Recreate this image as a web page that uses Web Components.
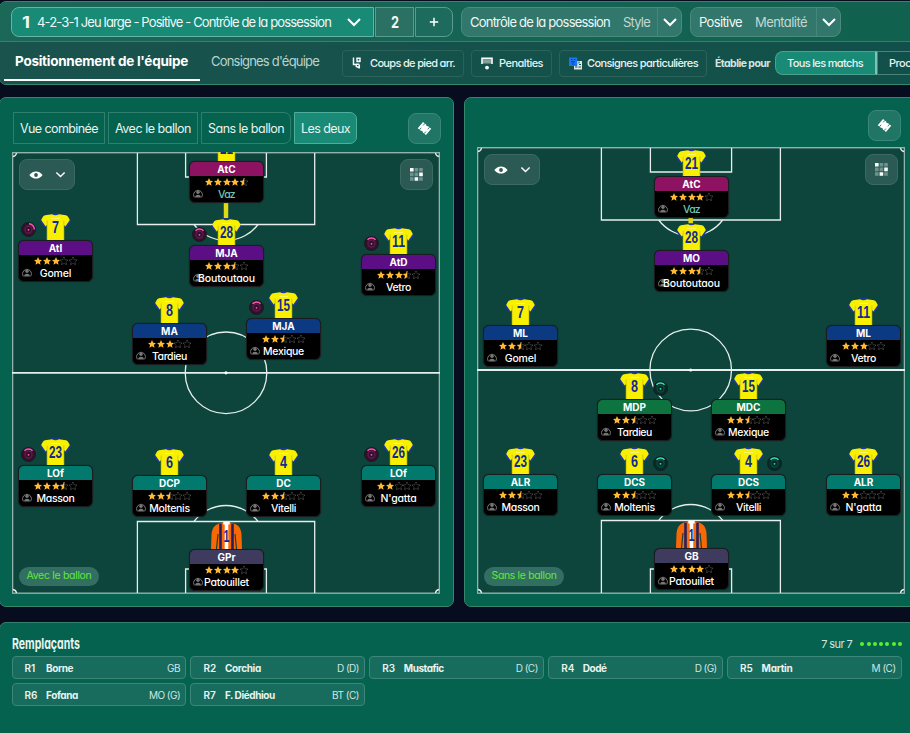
<!DOCTYPE html>
<html lang="fr">
<head>
<meta charset="utf-8">
<title>Tactique</title>
<style>
  html, body { margin: 0; height: 733px; overflow: hidden; }
  body {
    background: #070c1f;
    color: #e9f3f0;
    font-family: Inter, "Liberation Sans", sans-serif;
    font-feature-settings: "cv11";
    font-size: 12px;
  }
</style>
</head>
<body>
<tactics-screen></tactics-screen>

<script>
/* name -> [viewBox size, markup] */
const ICONS = {
  chevron: ['16 10', '<path d="M2 2l6 6 6-6" fill="none" stroke="#fff" stroke-width="2.1"/>'],
  plus: ['10 10', '<path d="M5 .8v8.4M.8 5h8.4" stroke="#fff" stroke-width="1.5"/>'],
  corner: ['9 12', '<path d="M1.500.5v7M.8 7.500h3.500M4.500 4.500h3.700M5 1.300h3v3H5zM7.300 7.500v4M7.300 10.800L4.300 9.500V7.300h3" fill="none" stroke="#f1f7f6" stroke-width="1.500"/>'],
  penalty: ['12 13', '<path d="M1.4 2.5h9v4h-9z" fill="#7da39b"/><path d="M1 7V1.4h10V7" fill="none" stroke="#fff" stroke-width="1.6"/><circle cx="6" cy="10.6" r="1.9" fill="#fff"/>'],
  orders: ['13 13', '<path d="M5 4h8v8.500H5z" fill="#dfe9e8"/><path d="M6 10h2.500M10 7.500h2M9.500 10h2.500M10 4.500v2" stroke="#15504a" stroke-width="1"/><rect y=".5" width="8.300" height="8.500" fill="#1676f3"/><path d="M2 2.500h1.400M5 2.500h1.400M2 4.800h4M3 7h2" stroke="#0a3f9c" stroke-width="1"/>'],
  eye: ['14 8', '<path d="M.4 4C2.4 1.4 4.6.4 7 .4S11.600 1.400 13.600 4C11.600 6.600 9.400 7.600 7 7.600S2.400 6.600.4 4z" fill="#fff"/><circle cx="7" cy="4" r="1.900" fill="#2d5a54"/>'],
  grid: ['13 13', '<g fill="#6f928c"><path d="M4.600 0h3.600v3.600H4.600zM9.200 0h3.600v3.600H9.200zM0 4.600h3.600v3.600H0zM4.600 4.600h3.600v3.600H4.600zM0 9.200h3.600v3.600H0zM9.200 9.200h3.600v3.600H9.200z"/></g><path d="M0 0h3.600v3.600H0zM9.200 4.600h3.600v3.600H9.200zM4.600 9.200h3.600v3.600H4.600z" fill="#fff"/>'],
  board: ['14 14', '<g transform="rotate(40 7 7)"><path d="M2 3.200h3.800l1.200.7 1.200-.7H12v7.600H8.200L7 10.100l-1.200.7H2z" fill="#fff"/><path d="M4.200 3v2.600M4.200 8.400V11M9.800 3v2.600M9.800 8.400V11" stroke="#207565" stroke-width=".8"/></g>'],
  face: ['10 10', '<path d="M1.300 9.400A4.500 4.500 0 1 1 8.700 9.400" fill="none" stroke="#777" stroke-width="1"/><circle cx="5" cy="4.300" r="1.700" fill="#777"/><path d="M2 9.400c.4-2 1.500-2.600 3-2.600s2.600.6 3 2.600z" fill="#777"/>'],
};

function icon(name, w, h) {
  const [size, inner] = ICONS[name];
  return `<svg width="${w}" height="${h}" viewBox="0 0 ${size}" style="display:block;flex:none">${inner}</svg>`;
}

class BaseElement extends HTMLElement {
  constructor() {
    super();
    this.attachShadow({ mode: 'open' });
  }
  connectedCallback() {
    this.shadowRoot.innerHTML = `<style>*{box-sizing:border-box}${this.css()}</style>${this.html()}`;
  }
  attr(name, fallback = '') { return this.getAttribute(name) ?? fallback; }
}

/* Rounded control of the header: slots in a row, optional tone. */
class BarChip extends BaseElement {
  css() {
    return `
      :host { display: flex; align-items: center; box-sizing: border-box; height: 30px;
        background: #32776b; border: 1px solid #4b8a7d; border-radius: 8px; font-size: 13px; color: #eff8f6; }
      :host([tone="active"]) { background: #188a76; border-color: #63b5a4; border-radius: 8px 0 0 8px; }
      :host([tone="mid"]) { background: #2a7164; border-color: #5a9d90; border-radius: 0; justify-content: center; }
      :host([tone="end"]) { background: #1c6b5c; border-color: #5a9d90; border-radius: 0 8px 8px 0; justify-content: center; }
      .drop { align-self: stretch; display: flex; align-items: center; justify-content: center;
        width: 24px; margin-left: auto; border-left: 1px solid #46857a; }
      :host([tone="active"]) .drop { border: 0; width: 38px; }
    `;
  }
  html() {
    return `<slot></slot>${this.hasAttribute('drop') ? `<div class="drop">${icon('chevron', 16, 10)}</div>` : ''}`;
  }
}

class ToolButton extends BaseElement {
  css() {
    return `
      :host { display: flex; align-items: center; box-sizing: border-box; height: 27px; padding: 0 8px 0 9px;
        border: 1px solid #2b6359; border-radius: 4px; font-size: 11px; color: #e9f3f0; font-weight: 500; }
      .ico { width: 18px; display: flex; }
    `;
  }
  html() {
    const [w, h] = this.attr('size').split(',');
    return `<div class="ico">${icon(this.attr('icon'), w, h)}</div><slot></slot>`;
  }
}

class AppHeader extends BaseElement {
  css() {
    return `
      :host { display: block; flex: none; box-sizing: border-box; height: 84px; width: 920px; margin-left: -1px;
        border: 1px solid #35866a; border-radius: 7px; overflow: hidden; background: #15504a; }
      .top { display: flex; height: 40px; padding: 5px 0 0 11px; background: linear-gradient(90deg, #1b6758, #11614f);
        border-bottom: 1px solid #35806d; }
      .group { display: flex; gap: 1px; margin-right: 8px; }
      .muted { color: #c3d8d5; margin-left: 13px; }
      .sub { display: flex; align-items: center; height: 42px; background: linear-gradient(90deg, #1a534d, #11504a); }
      .tab { align-self: flex-start; display: flex; align-items: center; margin-left: 4px; padding: 0 12px 0 11px;
        height: 39px; border-bottom: 2px solid #fff; font-size: 13.5px; font-weight: 700; color: #fff; }
      .tab.off { border-color: transparent; font-weight: 400; font-size: 13px; color: #bdd3cf; margin-left: 0; padding: 1px 0 0 11px; }
      .for { font-size: 10.500px; font-weight: 700; color: #d5e5e2; margin: 0 5px 0 8px; }
      .seg { display: flex; align-items: center; height: 24px; box-sizing: border-box; border: 1px solid #4aa18e;
        font-size: 11px; font-weight: 500; padding-left: 11px; flex: none; }
      .seg.on { width: 102px; background: #188a76; border-radius: 8px 0 0 8px; border-right: 2px solid #7fc3b5; }
      .seg.next { width: 60px; border-color: #4b8379; }
    `;
  }
  html() {
    return `
      <div class="top">
        <div class="group">
          <bar-chip tone="active" drop style="width:363px;padding-left:10px">
            <fit-text w="8" squash style="font-size:16px;font-weight:700">1</fit-text>
            <fit-text w="294" style="margin-left:7px">4-2-3-1 Jeu large - Positive - Contrôle de la possession</fit-text>
          </bar-chip>
          <bar-chip tone="mid" style="width:39px"><fit-text w="8" squash style="font-size:16px;font-weight:700">2</fit-text></bar-chip>
          <bar-chip tone="end" style="width:38px">${icon('plus', 10, 10)}</bar-chip>
        </div>
        <bar-chip drop style="width:221px;padding-left:8px;margin-right:8px">
          <fit-text w="140">Contrôle de la possession</fit-text><fit-text class="muted" w="27">Style</fit-text>
        </bar-chip>
        <bar-chip drop style="width:151px;padding-left:8px">
          <fit-text w="43">Positive</fit-text><fit-text class="muted" w="52">Mentalité</fit-text>
        </bar-chip>
      </div>
      <div class="sub">
        <div class="tab"><fit-text w="173">Positionnement de l'équipe</fit-text></div>
        <div class="tab off"><fit-text w="108">Consignes d'équipe</fit-text></div>
        <tool-button icon="corner" size="9,12" style="margin-left:23px"><fit-text w="85">Coups de pied arr.</fit-text></tool-button>
        <tool-button icon="penalty" size="12,13" style="margin-left:7px"><fit-text w="44">Penalties</fit-text></tool-button>
        <tool-button icon="orders" size="13,13" style="margin-left:7px"><fit-text w="111">Consignes particulières</fit-text></tool-button>
        <fit-text class="for" w="55">Établie pour</fit-text>
        <div class="seg on"><fit-text w="76">Tous les matchs</fit-text></div>
        <div class="seg next"><fit-text w="22">Proc</fit-text></div>
      </div>`;
  }
}

/* Square translucent button */
class IconButton extends BaseElement {
  css() {
    return `
      :host { display: flex; align-items: center; justify-content: center; gap: 12px; box-sizing: border-box;
        width: 33px; height: 31px; border: 1px solid #3b867a; border-radius: 8px; background: #207565; }
      :host([dim]) { background: #2b5a54; border-color: #3b6a62; }
      :host([wide]) { width: 56px; }
    `;
  }
  html() {
    if (this.hasAttribute('wide')) return icon('eye', 14, 8) + icon('chevron', 11, 7);
    const n = this.attr('icon');
    return icon(n, n === 'grid' ? 13 : 15, n === 'grid' ? 13 : 15);
  }
}

/* name -> drawn width of the label */
const NAME_WIDTH = {
  Gomel: 31.5, Vaz: 17, Boutoutaou: 57, Vetro: 25, Tardieu: 35, Mexique: 41,
  Masson: 38, Moltenis: 40.5, Vitelli: 25, "N'gatta": 36, Patouillet: 45,
};

const LINE_COLOR = {
  att: ['#8d1262', '#b53a8a'], am: ['#5c0f85', '#8433a8'], mid: ['#0b3a82', '#2b5aa5'],
  dm: ['#0d7440', '#2f9862'], def: ['#01796d', '#2f9b8d'], gk: ['#3e3b5e', '#5d5a7c'],
};

class PlayerCard extends BaseElement {
  css() {
    const [bg, edge] = LINE_COLOR[this.attr('line')];
    return `
      :host { display: flex; flex-direction: column; align-items: center; width: 75px; color: #fff; }
      .kit { position: relative; width: 31px; height: 27px; margin-left: -1px; }
      .kit > svg { display: block; overflow: visible; }
      .order { position: absolute; top: 9px; }
      .order.in { left: -19px; }
      .order.out { left: 34px; }
      .card { width: 75px; height: 42px; background: #000; border-radius: 6px; overflow: hidden;
        border: 1px solid #1c1d20; box-shadow: 0 0 1px #1b1b1d; }
      .role { height: 15px; margin: -1px -1px 0; background: ${bg}; border: 1px solid ${edge}; border-bottom: 0;
        border-radius: 6px 6px 0 0; text-align: center; font: 700 10px/14px Inter, sans-serif; }
      .stars { display: flex; justify-content: center; gap: .6px; height: 12px; padding-top: 2px; }
      .who { position: relative; height: 14px; text-align: center; font-size: 10.500px; line-height: 13px; font-weight: 450; }
      .who > svg { position: absolute; left: 3px; top: 0; }
      .who fit-text { position: relative; }
    `;
  }
  star(i, rating) {
    const p = 'M4 0l1.200 2.700 2.900.3-2.200 1.900.7 2.900L4 6.300 1.400 7.800l.7-2.900L-.1 3l2.900-.3z';
    const fill = rating - i;
    const gold = fill >= 1 ? `<path d="${p}" fill="#ffb933"/>`
      : fill > 0 ? '<path d="M4.300 0V6.300H4L1.400 7.800l.7-2.900L-.1 3l2.900-.3L4 0z" fill="#ffb933"/>' : '';
    const hollow = fill < 1 ? `<path d="${p}" fill="none" stroke="#6a6a6a" stroke-width=".6" stroke-dasharray="1.500 .5"/>` : '';
    return `<svg width="8" height="8" viewBox="0 0 8 8">${hollow}${gold}</svg>`;
  }
  shirt(no) {
    const keeper = this.attr('line') === 'gk';
    const num = `<text x="15.500" y="20" text-anchor="middle" font-family="Liberation Sans, sans-serif" font-weight="700"
      font-size="16.500" fill="#102a96" textLength="${keeper ? 6 : no.length > 1 ? 13 : 7}" lengthAdjust="spacingAndGlyphs">${no}</text>`;
    if (keeper) {
      return `<svg width="31" height="27" viewBox="0 0 31 27">
        <path d="M8 1.500L12 .5h7l4 1c4.500 1.500 7 5 7.500 11l.5 14.500H0l.5-14.500C1 6.500 3.500 3 8 1.500z" fill="#f86906"/>
        <path d="M7 12L5.500 27M24 12l1.500 15" stroke="#134239" stroke-width="1.200"/>
        <path d="M8.200 1.500h2.600V27H8.200zM20.200 1.500h2.600V27h-2.600z" fill="#24205e"/>
        <path d="M12.300 0h6.400v2.500h-1.400V27h-3.600V2.500h-1.400z" fill="#fff"/>${num}</svg>`;
    }
    return `<svg width="31" height="27" viewBox="0 0 31 27">
      <path d="M11.500 2V.2h8V2z" fill="#1c35b0"/>
      <path d="M0 8.300L1.500 6.500 6.500 13 4.600 14.500zM31 8.300l-1.500-1.800L24.500 13l1.900 1.500z" fill="#1c35b0"/>
      <path d="M5 2.300l7-1.100c2 1.300 5 1.300 7 0l7 1.100c1.500.3 2.300 1.500 3.800 4.800L25.300 13.600 24 12v15H7V12l-1.300 1.600L1.200 7.100C2.700 3.800 3.500 2.600 5 2.300z" fill="#f8f000"/>
      <path d="M7.200 7.500V27M23.800 7.500V27" stroke="#c9c312" stroke-width=".8"/>
      <path d="M11 5.500h9" stroke="#fff68c" stroke-width=".8"/>${num}</svg>`;
  }
  order(kind) {
    if (!kind) return '';
    const [base, ring, lit] = kind === 'in' ? ['#35102c', '#5b1e4c', '#ff56b4'] : ['#082b27', '#0d4a41', '#2ee6b8'];
    return `<svg class="order ${kind}" width="15" height="15" viewBox="0 0 15 15">
      <circle cx="7.500" cy="7.500" r="7" fill="${base}" stroke="#10191b" stroke-width=".8"/>
      <circle cx="7.500" cy="7.500" r="3.500" fill="none" stroke="${ring}" stroke-width="1.300"/>
      <path d="${this.hasAttribute('side') ? 'M8 1.800a5.600 5.600 0 0 1 5.300 5.700' : 'M3.500 3.800a5.600 5.600 0 0 1 8 0'}" fill="none" stroke="${lit}" stroke-width="1.500"/>
      <circle cx="7.500" cy="7.800" r=".9" fill="${lit}"/></svg>`;
  }
  html() {
    const name = this.attr('name');
    const rating = +this.attr('rating');
    return `
      <div class="kit">${this.shirt(this.attr('no'))}${this.order(this.attr('order'))}</div>
      <div class="card">
        <div class="role">${this.attr('role-label')}</div>
        <div class="stars">${[0, 1, 2, 3, 4].map(i => this.star(i, rating)).join('')}</div>
        <div class="who">${icon('face', 10, 10)}<fit-text w="${NAME_WIDTH[name]}" ${name === 'Vaz' ? 'style="color:#6fc7b8"' : ''}>${name}</fit-text></div>
      </div>`;
  }
}

/* Pitch markings plus players pinned on it; x is the centre of a card, y its top edge. */
class TacticPitch extends BaseElement {
  get data() { return PITCHES[this.attr('side')]; }
  css() {
    return `
      :host { display: block; position: relative; width: 428px; height: ${this.data.h}px; overflow: hidden; background: #0d443b; }
      .lines { display: block; }
      player-card, .eye, .grid, .tag { position: absolute; }
      .eye { left: 7px; top: 7px; }
      .grid { left: 388px; top: 7px; }
      .tag { left: 7px; bottom: 8px; height: 19px; width: 80px; border-radius: 10px; background: #326f62;
        color: #5fe83b; font-size: 10.500px; line-height: 18px; text-align: center; }
    `;
  }
  html() {
    const { h, box, goal, boxDepth, mid, bottom, link, players, tag, tagWidth, cx } = this.data;
    const [bx, bw] = box, [gx, gw] = goal;
    return `
      <svg class="lines" width="428" height="${h}" viewBox="0 0 428 ${h}" fill="none" stroke="#e6efed" stroke-width="1.300">
        <rect x=".6" y=".7" width="426.800" height="${h - 1.5}" stroke="#93b2ab" stroke-width="1.400"/>
        <path d="M0 ${mid}h428" stroke-width="1.800"/>
        <circle cx="${cx}" cy="${mid}" r="40.800"/>
        <circle cx="${cx}" cy="${mid}" r="1.600" fill="#fff" stroke="none"/>
        <path d="M${bx} 1v${boxDepth}h${bw}V1M${bx} ${h - 1}V${bottom}h${bw}V${h - 1}"/>
        <path d="M${gx} 1v24h${gw}V1M${gx} ${h - 1}v-24h${gw}v24"/>
        <path d="M${cx - 32} ${boxDepth + 1}a40 40 0 0 0 64 0M${cx - 32} ${bottom}a40 40 0 0 1 64 0"/>
        <path d="M1 4.500A4 4 0 0 0 4.500 1M423.500 1A4 4 0 0 0 427 4.500M1 ${h - 4.500}A4 4 0 0 1 4.500 ${h - 1}M423.500 ${h - 1}A4 4 0 0 1 427 ${h - 4.500}"/>
        <path d="M${cx} ${link[0]}V${link[1]}" stroke="#dedb16" stroke-width="4.500"/>
      </svg>
      ${players.map(([x, y, no, role, line, rating, name, order, side]) => `
        <player-card style="left:${x - 37.5}px;top:${y - 27}px" no="${no}" role-label="${role}" line="${line}"
          rating="${rating}" name="${name}" ${order ? `order="${order}"` : ''} ${side ? 'side' : ''}></player-card>`).join('')}
      <icon-button class="eye" dim wide></icon-button>
      <icon-button class="grid" dim icon="grid"></icon-button>
      <div class="tag"><fit-text w="${tagWidth}">${tag}</fit-text></div>`;
  }
}

const PITCHES = {
  with: {
    h: 442, cx: 214, box: [125.4, 177.3], goal: [173.6, 80.8], boxDepth: 71.5, mid: 220.8, bottom: 369.5,
    link: [50, 66], tag: 'Avec le ballon', tagWidth: 65,
    players: [
      [214.5, 9, '21', 'AtC', 'att', 4.5, 'Vaz'],
      [214.5, 92.5, '28', 'MJA', 'am', 3.5, 'Boutoutaou', 'in'],
      [43.5, 87.5, '7', 'AtI', 'am', 3, 'Gomel', 'in', 1],
      [386.5, 102, '11', 'AtD', 'am', 3.5, 'Vetro', 'in'],
      [157.5, 171, '8', 'MA', 'mid', 3, 'Tardieu'],
      [271.5, 166, '15', 'MJA', 'mid', 2.5, 'Mexique', 'in'],
      [43.5, 313, '23', 'LOf', 'def', 3.5, 'Masson', 'in'],
      [157.5, 323, '6', 'DCP', 'def', 2.5, 'Moltenis'],
      [271.5, 323, '4', 'DC', 'def', 2.5, 'Vitelli'],
      [386.5, 313, '26', 'LOf', 'def', 2, "N'gatta", 'in'],
      [214.5, 397, '1', 'GPr', 'gk', 4, 'Patouillet'],
    ],
  },
  without: {
    h: 447, cx: 213.7, box: [124.4, 179], goal: [173.4, 81.2], boxDepth: 72, mid: 223, bottom: 373.5,
    link: [69, 78], tag: 'Sans le ballon', tagWidth: 65,
    players: [
      [214.5, 29, '21', 'AtC', 'att', 4, 'Vaz'],
      [214.5, 103, '28', 'MO', 'am', 3.5, 'Boutoutaou'],
      [43.5, 178, '7', 'ML', 'mid', 2.5, 'Gomel'],
      [386.5, 178, '11', 'ML', 'mid', 3, 'Vetro'],
      [157.5, 252, '8', 'MDP', 'dm', 2.5, 'Tardieu', 'out'],
      [271.5, 252, '15', 'MDC', 'dm', 2.5, 'Mexique'],
      [43.5, 327, '23', 'ALR', 'def', 2.5, 'Masson'],
      [157.5, 327, '6', 'DCS', 'def', 2.5, 'Moltenis', 'out'],
      [271.5, 327, '4', 'DCS', 'def', 2.5, 'Vitelli', 'out'],
      [386.5, 327, '26', 'ALR', 'def', 2, "N'gatta"],
      [214.5, 401, '1', 'GB', 'gk', 4, 'Patouillet'],
    ],
  },
};

class PitchPanel extends BaseElement {
  css() {
    return `
      :host { display: flex; flex-direction: column; box-sizing: border-box; height: 510px; flex: none;
        border: 1px solid #35866a; border-radius: 7px; background: #04624f; }
      .bar { display: flex; align-items: center; }
      .bar icon-button { margin-left: auto; }
    `;
  }
  html() { return `<div class="bar"><slot name="tabs"></slot><icon-button icon="board"></icon-button></div><slot></slot>`; }
}

class ViewTabs extends BaseElement {
  css() {
    return `
      :host { display: flex; gap: 3px; font-size: 12.500px; }
      div { display: flex; align-items: center; justify-content: center; height: 32px; border: 1px solid #2f7f6d; }
      div:first-child { border-radius: 7px 0 0 7px; }
      div.round { border-radius: 0 7px 7px 0; }
      div.on { background: #188a76; border-color: #4fae9b; }
    `;
  }
  html() {
    return `
      <div style="width:92px"><fit-text w="78">Vue combinée</fit-text></div>
      <div style="width:90px"><fit-text w="76">Avec le ballon</fit-text></div>
      <div class="round" style="width:90px"><fit-text w="76">Sans le ballon</fit-text></div>
      <div class="round on" style="width:63px"><fit-text w="49">Les deux</fit-text></div>`;
  }
}

class BenchSlot extends BaseElement {
  css() {
    return `
      :host { display: flex; align-items: center; box-sizing: border-box; height: 23px; padding: 0 5px 0 12px;
        background: #176c5d; border: 1px solid #3c8777; border-radius: 4px; font-size: 10px; }
      b { width: 21.500px; font-weight: 600; }
      .name { font-weight: 700; }
      .pos { margin-left: auto; color: #d3e5e1; }
    `;
  }
  html() {
    return `<b>${this.attr('no')}</b><fit-text class="name" w="${this.attr('nw')}">${this.attr('name')}</fit-text>
      <fit-text class="pos" w="${this.attr('pw')}">${this.attr('pos')}</fit-text>`;
  }
}

class BenchPanel extends BaseElement {
  css() {
    return `
      :host { display: block; flex: none; box-sizing: border-box; width: 920px; height: 120px; margin-left: -1px; padding: 11px 17px 0 11.500px;
        border: 1px solid #35806d; border-radius: 7px; background: #04624f; }
      .head { display: flex; align-items: center; height: 18px; }
      .head .title { font-size: 15px; font-weight: 700; }
      .count { display: flex; align-items: center; margin: 2px -1px 0 auto; font-size: 11px; color: #d3e5e1; }
      .dots { display: flex; gap: 2.300px; margin-left: 8px; }
      .dots i { width: 4px; height: 4px; border-radius: 50%; background: #5af02c; }
      .grid { display: grid; grid-template-columns: repeat(5, 174.500px); gap: 4px 4.400px; margin-top: 4px; }
    `;
  }
  html() {
    const slots = [
      ['Borne', 'GB', 27, 13], ['Corchia', 'D (D)', 36, 22], ['Mustafic', 'D (C)', 40, 22], ['Dodé', 'D (G)', 24, 22],
      ['Martin', 'M (C)', 31, 24], ['Fofana', 'MO (G)', 32, 31], ['F. Diédhiou', 'BT (C)', 50, 27],
    ];
    return `
      <div class="head"><fit-text class="title" w="68" squash>Remplaçants</fit-text>
        <div class="count"><fit-text w="31">7 sur 7</fit-text><div class="dots">${'<i></i>'.repeat(7)}</div></div></div>
      <div class="grid">${slots.map(([n, p, nw, pw], i) =>
        `<bench-slot no="R${i + 1}" name="${n}" pos="${p}" nw="${nw}" pw="${pw}"></bench-slot>`).join('')}</div>`;
  }
}

class TacticsScreen extends BaseElement {
  css() {
    return `
      :host { display: flex; flex-direction: column; width: 910px; height: 733px; padding-top: 1px; overflow: hidden; box-sizing: border-box; }
      .pitches { display: flex; flex: none; gap: 10px; margin: 12px 0 15px -1px; width: 940px; }
      .left { width: 455px; padding: 14px 12px 0; }
      .right { width: 460px; padding: 12px 22px 0 12px; }
      .left view-tabs { margin-left: 1px; }
      .left tactic-pitch { margin-top: 8px; }
      .right tactic-pitch { margin: 6px 0 0; }
    `;
  }
  html() {
    return `
      <app-header></app-header>
      <div class="pitches">
        <pitch-panel class="left"><view-tabs slot="tabs"></view-tabs><tactic-pitch side="with"></tactic-pitch></pitch-panel>
        <pitch-panel class="right"><tactic-pitch side="without"></tactic-pitch></pitch-panel>
      </div>
      <bench-panel></bench-panel>`;
  }
}

/* Sets its text to a given width, by tracking or (squash) by condensing the glyphs. */
class FitText extends BaseElement {
  css() { return `:host { display: inline-block; flex: none; white-space: nowrap; } span { display: inline-block; transform-origin: 0 50%; }`; }
  html() { return '<span><slot></slot></span>'; }
  connectedCallback() {
    super.connectedCallback();
    const span = this.shadowRoot.querySelector('span');
    const want = +this.attr('w');
    const natural = span.getBoundingClientRect().width;
    this.style.width = `${want}px`;
    if (this.hasAttribute('squash')) span.style.transform = `scaleX(${want / natural})`;
    else span.style.letterSpacing = `${(want - natural) / this.textContent.length}px`;
  }
}

customElements.define('tactics-screen', TacticsScreen);
customElements.define('app-header', AppHeader);
customElements.define('bar-chip', BarChip);
customElements.define('tool-button', ToolButton);
customElements.define('icon-button', IconButton);
customElements.define('pitch-panel', PitchPanel);
customElements.define('view-tabs', ViewTabs);
customElements.define('tactic-pitch', TacticPitch);
customElements.define('player-card', PlayerCard);
customElements.define('bench-panel', BenchPanel);
customElements.define('bench-slot', BenchSlot);
customElements.define('fit-text', FitText);
</script>
</body>
</html>
